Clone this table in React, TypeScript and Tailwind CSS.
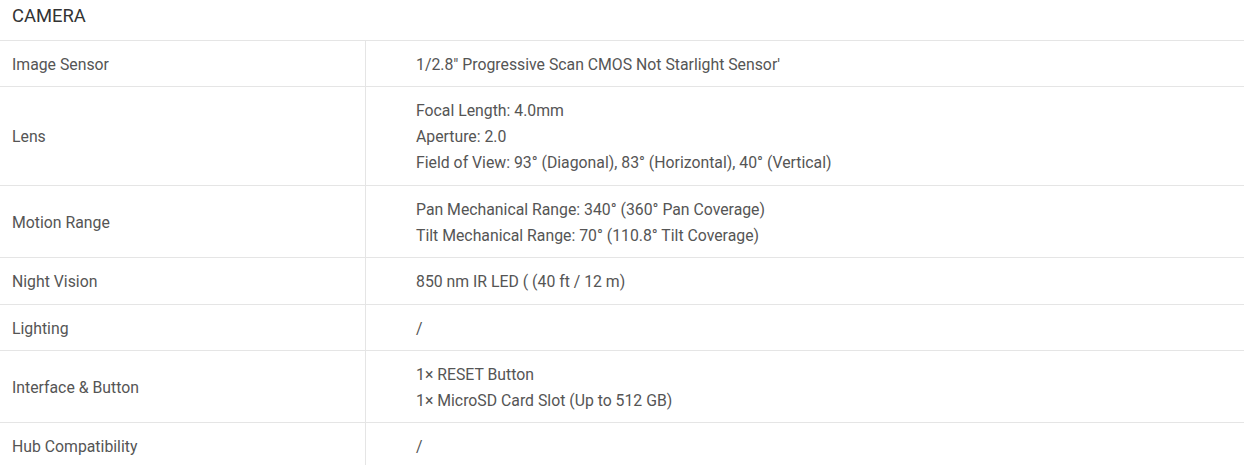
const rows: { label: string; values: string[] }[] = [
  { label: "Image Sensor", values: ["1/2.8\" Progressive Scan CMOS Not Starlight Sensor'"] },
  {
    label: "Lens",
    values: [
      "Focal Length: 4.0mm",
      "Aperture: 2.0",
      "Field of View: 93° (Diagonal), 83° (Horizontal), 40° (Vertical)",
    ],
  },
  {
    label: "Motion Range",
    values: [
      "Pan Mechanical Range: 340° (360° Pan Coverage)",
      "Tilt Mechanical Range: 70° (110.8° Tilt Coverage)",
    ],
  },
  { label: "Night Vision", values: ["850 nm IR LED ( (40 ft / 12 m)"] },
  { label: "Lighting", values: ["/"] },
  {
    label: "Interface & Button",
    values: ["1× RESET Button", "1× MicroSD Card Slot (Up to 512 GB)"],
  },
  { label: "Hub Compatibility", values: ["/"] },
];

const App = () => {
  return (
    <div
      className="w-[1244px] bg-white"
      style={{ fontFamily: "Roboto, 'Liberation Sans', sans-serif" }}
    >
      <div className="h-[41px] border-b border-[#e5e5e5] px-3 pt-[5px] text-[18.4px] leading-[22px] text-[#333]">
        CAMERA
      </div>
      {rows.map((row) => (
        <div key={row.label} className="flex border-b border-[#e5e5e5] text-[15.8px] leading-[26px] text-[#555]">
          <div className="flex w-[366px] shrink-0 items-center border-r border-[#e5e5e5] pl-3 pt-[11px] pb-[8.4px]">
            {row.label}
          </div>
          <div className="flex-1 pl-[50px] pt-[11px] pb-[8.4px]">
            {row.values.map((v) => (
              <div key={v}>{v}</div>
            ))}
          </div>
        </div>
      ))}
    </div>
  );
};

export default App;
